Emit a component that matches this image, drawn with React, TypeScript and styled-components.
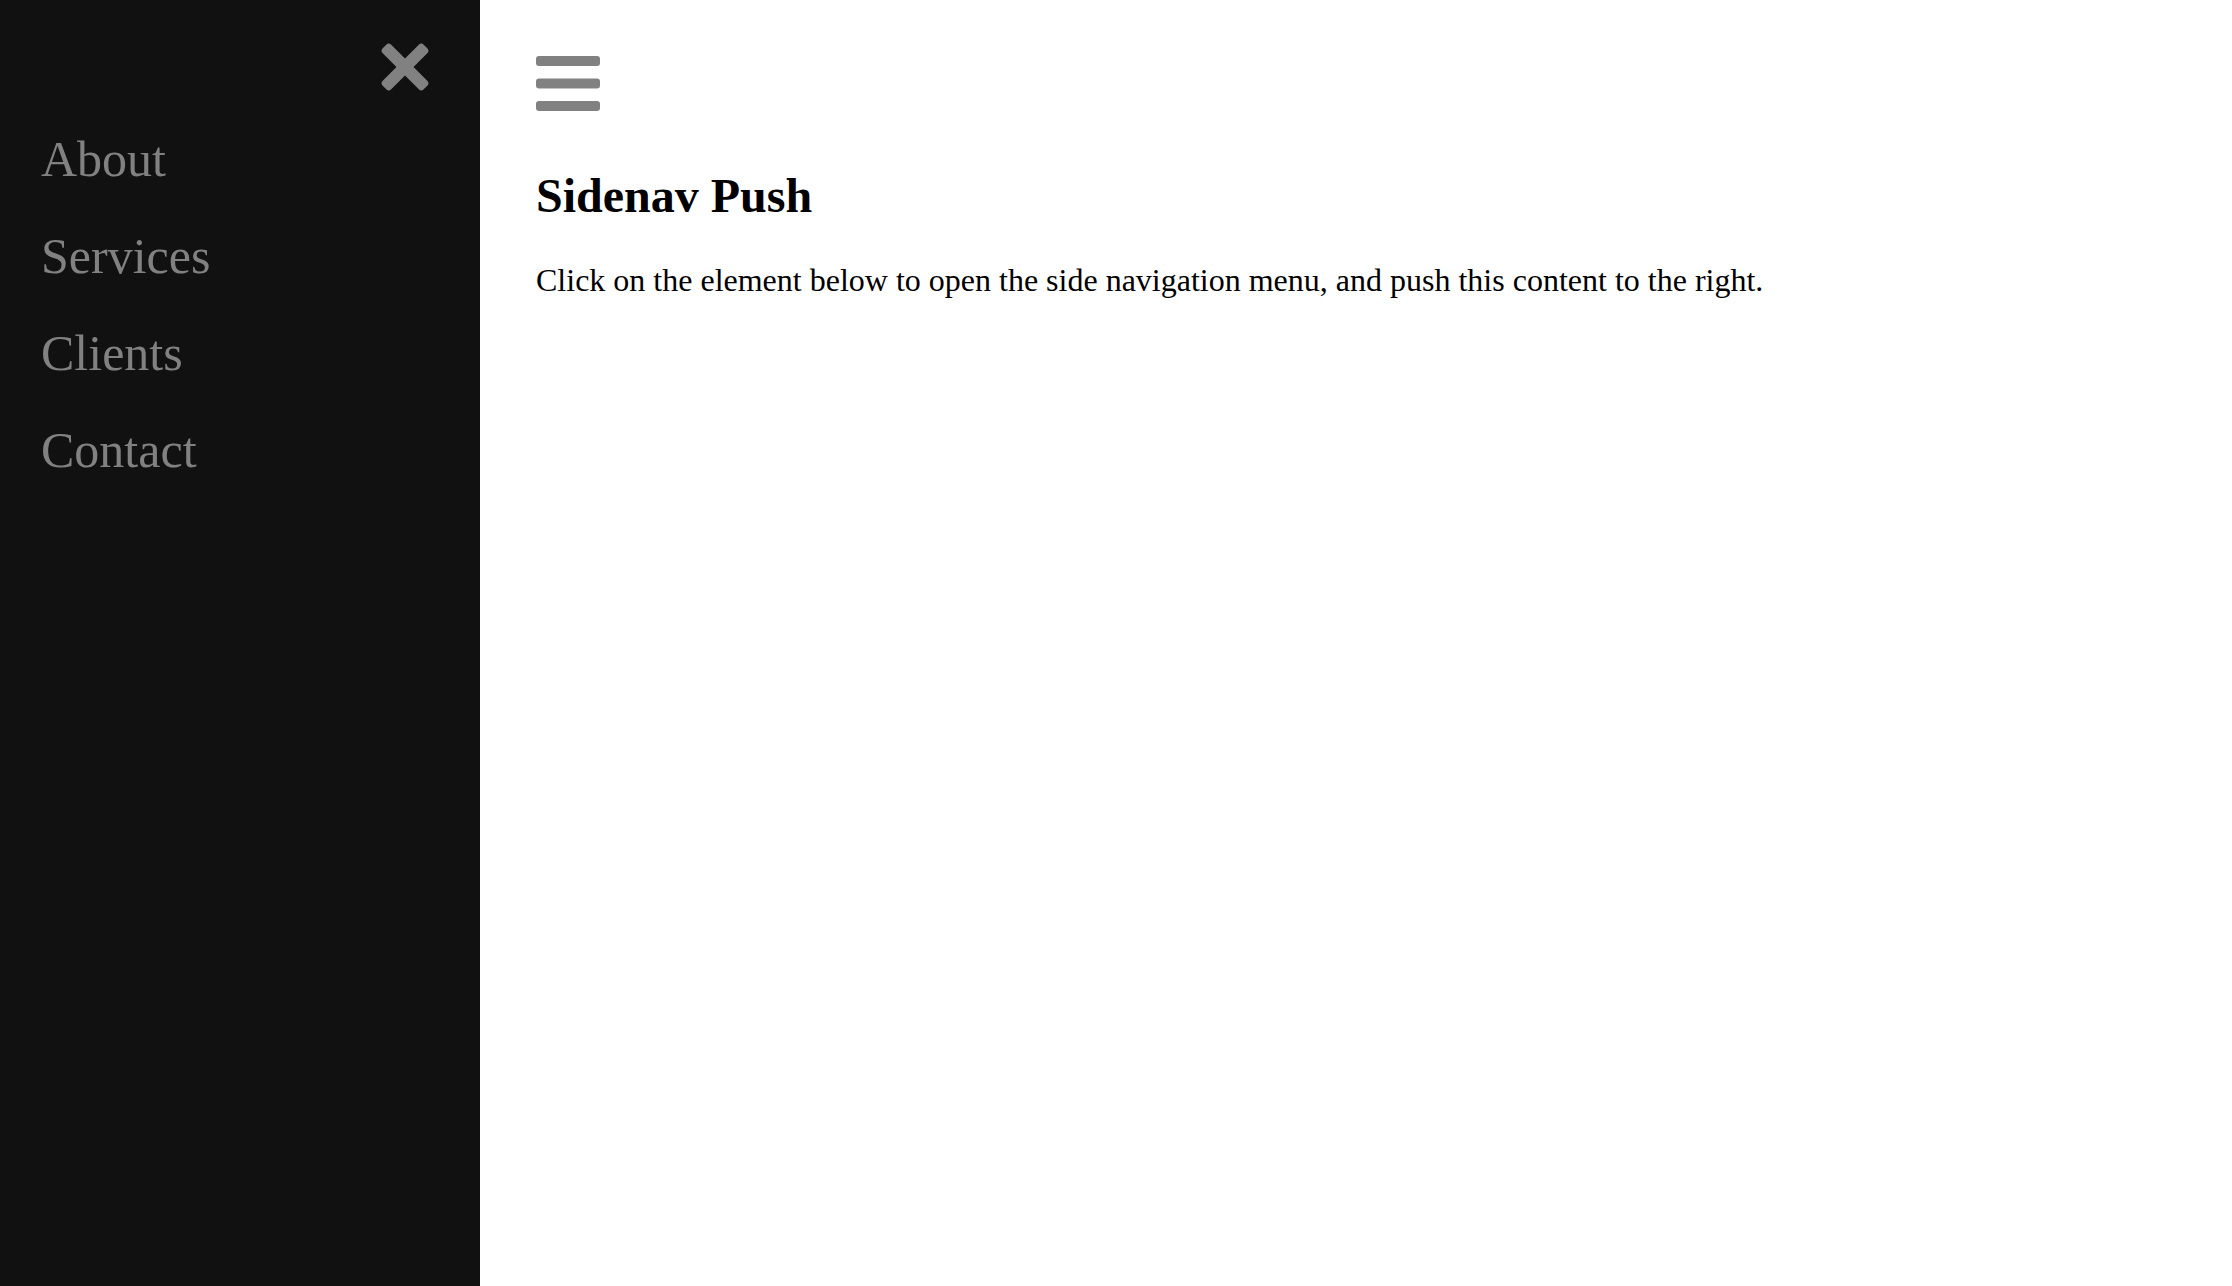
import React from "react";
import styled, { createGlobalStyle } from "styled-components";

const GlobalStyle = createGlobalStyle`
  html, body {
    margin: 0;
    padding: 0;
    background: #ffffff;
    font-family: "Liberation Serif", "Times New Roman", serif;
  }
`;

const Page = styled.div`
  display: flex;
  min-height: 100vh;
`;

const Sidenav = styled.nav`
  flex: 0 0 480px;
  width: 480px;
  min-height: 100vh;
  background: #111111;
  display: flex;
  flex-direction: column;
  padding-top: 42px;
  box-sizing: border-box;
`;

const CloseRow = styled.div`
  display: flex;
  justify-content: flex-end;
  padding-right: 50px;
  height: 50px;
`;

const CloseButton = styled.button`
  width: 50px;
  height: 50px;
  padding: 0;
  border: 0;
  background: transparent;
  cursor: pointer;
  display: block;
`;

const NavList = styled.div`
  display: flex;
  flex-direction: column;
  padding-top: 19px;
`;

const NavLink = styled.a`
  display: block;
  padding: 20px 16px 20px 41px;
  font-family: "Liberation Serif", "Times New Roman", serif;
  font-size: 50px;
  line-height: 57px;
  color: #818181;
  text-decoration: none;
  cursor: pointer;
  &:hover {
    color: #f1f1f1;
  }
`;

const Main = styled.main`
  flex: 1;
  padding: 56px 0 0 56px;
  color: #000000;
`;

const MenuButton = styled.button`
  display: block;
  width: 64px;
  height: 55px;
  padding: 0;
  border: 0;
  background: transparent;
  cursor: pointer;
`;

const Heading = styled.h2`
  margin: 57px 0 0;
  font-family: "Liberation Serif", "Times New Roman", serif;
  font-weight: bold;
  font-size: 48px;
  line-height: 55px;
`;

const Paragraph = styled.p`
  margin: 39px 0 0;
  font-family: "Liberation Serif", "Times New Roman", serif;
  font-size: 32px;
  line-height: 37px;
`;

const CloseIcon = () => (
  <svg width="50" height="50" viewBox="0 0 50 50" aria-hidden="true">
    <g fill="#818181">
      <rect x="-4" y="19" width="58" height="12" rx="3.5" transform="rotate(45 25 25)" />
      <rect x="-4" y="19" width="58" height="12" rx="3.5" transform="rotate(-45 25 25)" />
    </g>
  </svg>
);

const MenuIcon = () => (
  <svg width="64" height="55" viewBox="0 0 64 55" aria-hidden="true">
    <g fill="#818181">
      <rect x="0" y="0" width="64" height="10" rx="3" />
      <rect x="0" y="22.5" width="64" height="10" rx="3" />
      <rect x="0" y="45" width="64" height="10" rx="3" />
    </g>
  </svg>
);

const links = ["About", "Services", "Clients", "Contact"];

export default function App() {
  return (
    <>
      <GlobalStyle />
      <Page>
        <Sidenav>
          <CloseRow>
            <CloseButton aria-label="Close navigation">
              <CloseIcon />
            </CloseButton>
          </CloseRow>
          <NavList>
            {links.map((l) => (
              <NavLink key={l} href="#">
                {l}
              </NavLink>
            ))}
          </NavList>
        </Sidenav>
        <Main>
          <MenuButton aria-label="Open navigation">
            <MenuIcon />
          </MenuButton>
          <Heading>Sidenav Push</Heading>
          <Paragraph>
            Click on the element below to open the side navigation menu, and push this content to the right.
          </Paragraph>
        </Main>
      </Page>
    </>
  );
}
